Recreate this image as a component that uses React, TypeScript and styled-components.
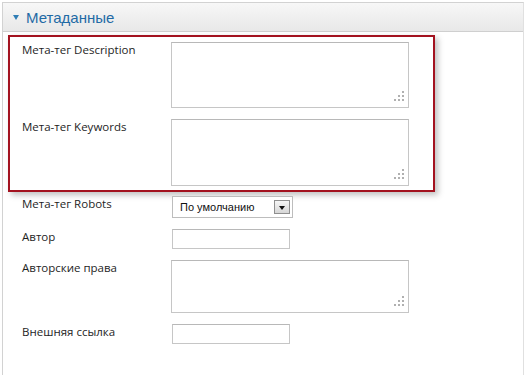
import styled, { createGlobalStyle } from "styled-components";

const GlobalStyle = createGlobalStyle`
  html, body {
    margin: 0;
    background: #fff;
  }
  body {
    font-family: "Open Sans", "DejaVu Sans", sans-serif;
  }
`;

const Grip = () => (
  <GripIcon width="10" height="10" viewBox="0 0 10 10">
    <rect x="8" y="0" width="2" height="2" />
    <rect x="4" y="4" width="2" height="2" />
    <rect x="8" y="4" width="2" height="2" />
    <rect x="0" y="8" width="2" height="2" />
    <rect x="4" y="8" width="2" height="2" />
    <rect x="8" y="8" width="2" height="2" />
  </GripIcon>
);

const MultiLine = ({ height }: { height: number }) => (
  <AreaWrap $h={height}>
    <TextArea />
    <Grip />
  </AreaWrap>
);

const Field = ({ label, children }: { label: string; children: React.ReactNode }) => (
  <Row>
    <Label>{label}</Label>
    {children}
  </Row>
);

const App = () => {
  return (
    <Page>
      <GlobalStyle />
      <Panel>
        <Header>
          <Arrow />
          <Title>Метаданные</Title>
        </Header>
        <Body>
          <Highlight>
            <Field label="Мета-тег Description">
              <MultiLine height={66} />
            </Field>
            <Field label="Мета-тег Keywords">
              <MultiLine height={67} />
            </Field>
          </Highlight>
          <Fields>
            <Field label="Мета-тег Robots">
              <Select>
                <span>По умолчанию</span>
                <DropButton />
              </Select>
            </Field>
            <Field label="Автор">
              <Input />
            </Field>
            <Field label="Авторские права">
              <MultiLine height={53} />
            </Field>
            <Field label="Внешняя ссылка">
              <Input />
            </Field>
          </Fields>
        </Body>
      </Panel>
    </Page>
  );
};

const Page = styled.div`
  height: 375px;
  padding: 2px 3px 0 2px;
  box-sizing: border-box;
  overflow: hidden;
`;

const Panel = styled.section`
  height: 420px;
  border: 1px solid #d2d2d2;
  border-right-color: #e0e0e0;
`;

const Header = styled.div`
  height: 28px;
  display: flex;
  align-items: center;
  gap: 7px;
  padding-left: 10px;
  border-bottom: 1px solid #cfcfcf;
  background: linear-gradient(#f7f7f7, #e8e8e8);
`;

const Arrow = styled.span`
  width: 0;
  height: 0;
  margin-top: 1px;
  border-left: 3.5px solid transparent;
  border-right: 3.5px solid transparent;
  border-top: 5px solid #2f7db5;
`;

const Title = styled.h2`
  margin: 0;
  font-family: "Liberation Sans", Arial, sans-serif;
  font-size: 15px;
  font-weight: normal;
  color: #1f6aa5;
`;

const Body = styled.div`
  padding: 3px 0 0 5px;
`;

const Highlight = styled.div`
  width: 427px;
  box-sizing: border-box;
  display: grid;
  gap: 11px;
  padding: 5px 0 4px 12px;
  border: 2px solid #a3121f;
  box-shadow: 3px 3px 6px rgba(0, 0, 0, 0.25);
`;

const Fields = styled.div`
  display: grid;
  gap: 11px;
  margin-top: 4px;
  padding-left: 14px;
`;

const Row = styled.div`
  display: grid;
  grid-template-columns: 149px auto;
  align-items: start;
`;

const Label = styled.label`
  font-size: 11.5px;
  line-height: 16px;
  color: #1e1e1e;
`;

const AreaWrap = styled.div<{ $h: number }>`
  position: relative;
  width: 238px;
  height: ${(p) => p.$h}px;
`;

const TextArea = styled.textarea`
  display: block;
  width: 100%;
  height: 100%;
  margin: 0;
  box-sizing: border-box;
  border: 1px solid #c6c6c6;
  border-top-color: #b8b8b8;
  background: #fff;
  resize: none;
  outline: none;
`;

const GripIcon = styled.svg`
  position: absolute;
  right: 5px;
  bottom: 7px;
  fill: #b0b0b0;
`;

const Select = styled.div`
  width: 121px;
  height: 22px;
  margin-left: 1px;
  box-sizing: border-box;
  display: flex;
  align-items: center;
  justify-content: space-between;
  padding: 0 2px 0 7px;
  border: 1px solid #bdbdbd;
  background: #fff;
  font-family: "Liberation Sans", Arial, sans-serif;
  font-size: 11px;
  color: #111;
`;

const DropButton = styled.span`
  position: relative;
  width: 16px;
  height: 14px;
  box-sizing: border-box;
  border: 1px solid #8f8f8f;
  background: linear-gradient(#f6f6f6, #d6d6d6);

  &::after {
    content: "";
    position: absolute;
    left: 4px;
    top: 5px;
    border-left: 3px solid transparent;
    border-right: 3px solid transparent;
    border-top: 4px solid #111;
  }
`;

const Input = styled.input`
  width: 118px;
  height: 20px;
  margin: 0 0 0 1px;
  box-sizing: border-box;
  border: 1px solid #c6c6c6;
  border-top-color: #b8b8b8;
  background: #fff;
  outline: none;
`;

export default App;
